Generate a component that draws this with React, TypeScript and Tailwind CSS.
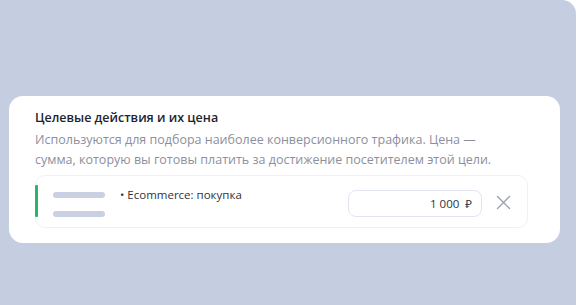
import React from 'react';

const App: React.FC = () => {
  return (
    <div
      className="flex h-[305px] w-[579px] bg-white"
      style={{ fontFamily: '"Open Sans", "Noto Sans", sans-serif' }}
    >
      <div className="h-full w-[576px] rounded-tr-[14px] bg-[#c5cee1] pl-[9px] pt-[96px]">
        <div className="h-[147px] w-[551px] rounded-[14px] bg-white pl-[26px] pr-[32px] pt-[12px]">
          <h2 className="text-[12.5px] leading-[20px] font-semibold text-[#21232e]">Целевые действия и их цена</h2>
          <p className="mt-[2px] w-[470px] text-[12.5px] leading-[20px] text-[#8c909e]">
            Используются для подбора наиболее конверсионного трафика. Цена — сумма, которую вы готовы платить за достижение посетителем этой цели.
          </p>
          <div className="mt-[5px] flex h-[53px] items-start rounded-[10px] border border-[#eff1f5]">
            <div className="mt-[9px] ml-[-1px] h-[32px] w-[3px] rounded-[1px] bg-[#2cb36c]" />
            <div className="ml-[15px] mt-[16px] flex w-[52px] flex-col gap-[13px]">
              <div className="h-[6px] rounded-full bg-[#c8d0e2]" />
              <div className="h-[6px] rounded-full bg-[#c8d0e2]" />
            </div>
            <div className="ml-[15px] mt-[11px] text-[11.5px] leading-[16px] text-[#2f3240]">• Ecommerce: покупка</div>
            <div className="ml-auto mt-[14px] flex h-[27px] w-[134px] items-center justify-end rounded-[8px] border border-[#e1e5ee] pr-[9px] text-[11.5px] text-[#2f3240]">
              1 000<span className="ml-[6px]">₽</span>
            </div>
            <button className="mt-[19px] ml-[14px] mr-[16px] text-[#9aa0b0]">
              <svg width="15" height="15" viewBox="0 0 15 15" fill="none" stroke="currentColor" strokeWidth="1.4" strokeLinecap="round">
                <path d="M1.5 1.5l12 12M13.5 1.5l-12 12" />
              </svg>
            </button>
          </div>
        </div>
      </div>
    </div>
  );
};

export default App;
